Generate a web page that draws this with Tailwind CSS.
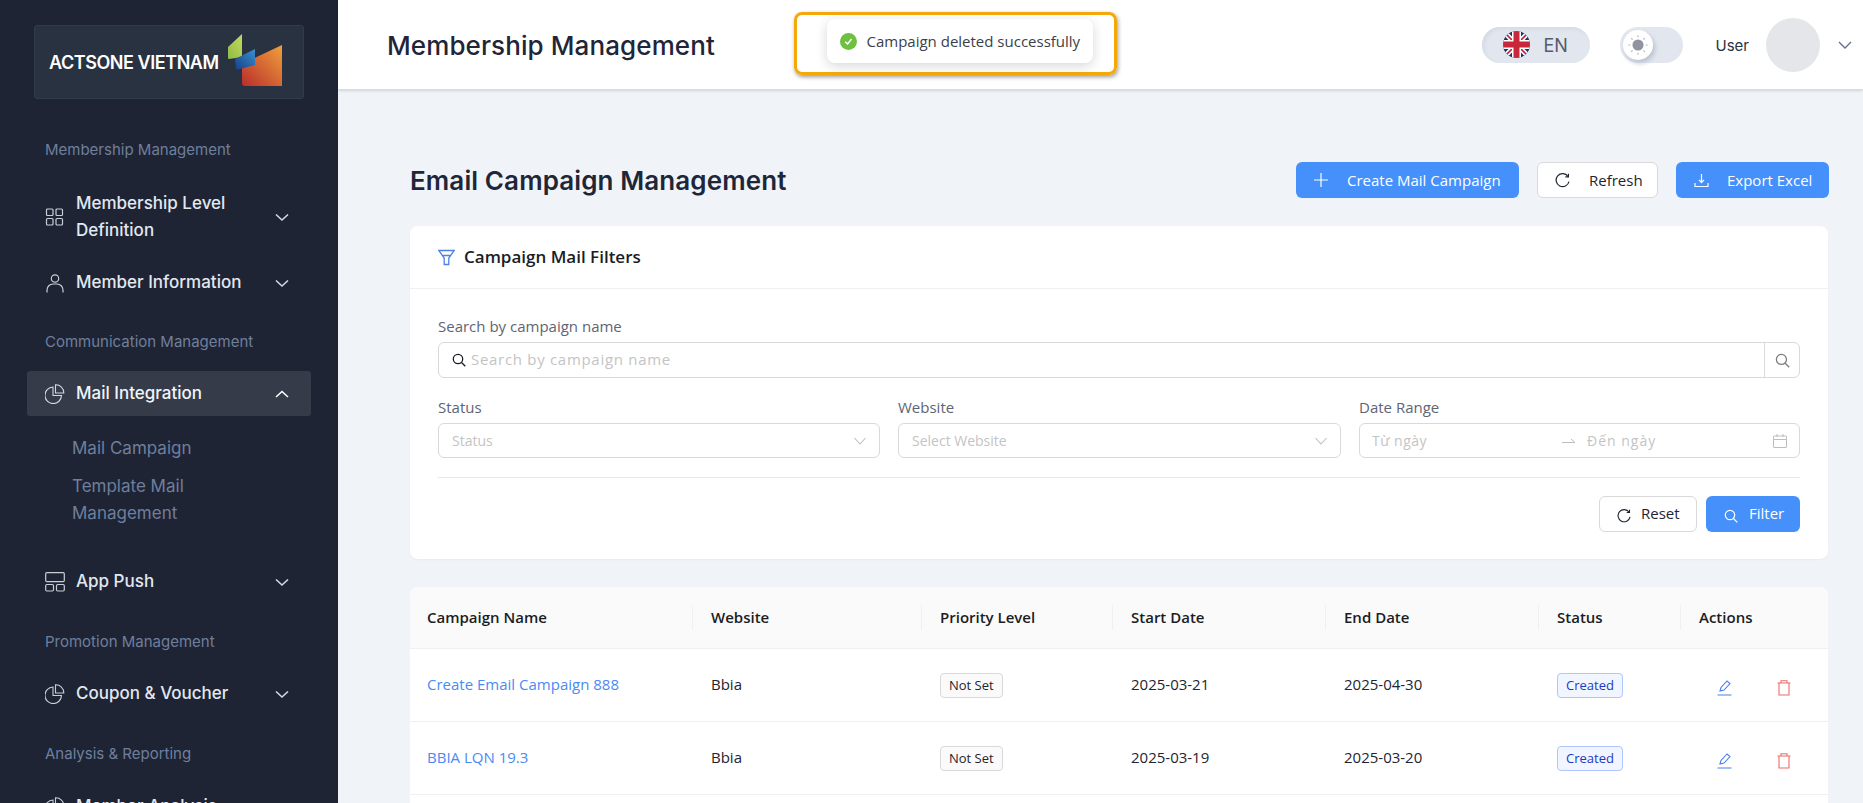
<!DOCTYPE html>
<html lang="en">
<head>
    <meta charset="UTF-8">
    <title>Email Campaign Management</title>
    <script src="https://cdn.jsdelivr.net/npm/@tailwindcss/browser@4"></script>
</head>
<body class="h-screen overflow-hidden bg-[#f0f4f8] font-['Open_Sans',sans-serif] text-[#1f2430]">
<div class="flex h-[803px] overflow-hidden">
    <!-- Sidebar -->
    <aside class="w-[338px] shrink-0 h-full overflow-hidden bg-[#1e2434] font-['Inter',sans-serif]">
        <div class="mt-[25px] ml-[34px] w-[270px] h-[74px] flex items-center justify-between pl-[14px] pr-[21px] rounded-[3px] bg-[#293241] border border-[#323b4a]">
            <span class="text-white font-semibold text-[18px] tracking-[-0.45px]">ACTSONE VIETNAM</span>
            <svg class="-mt-[4px]" width="54" height="52" viewBox="0 0 54 52">
                <defs>
                    <linearGradient id="logo-o" x1="0" y1="1" x2="1" y2="0"><stop offset="0" stop-color="#b92d2d"/><stop offset="1" stop-color="#f0a03a"/></linearGradient>
                    <linearGradient id="logo-g" x1="0" y1="1" x2="1" y2="0"><stop offset="0" stop-color="#8fbb48"/><stop offset="1" stop-color="#c5d95c"/></linearGradient>
                    <linearGradient id="logo-b" x1="0" y1="1" x2="1" y2="0"><stop offset="0" stop-color="#173f85"/><stop offset="1" stop-color="#3a8fd0"/></linearGradient>
                </defs>
                <path d="M14 30 L 54 11 V 52 H 17 Q 14 52 14 49 Z" fill="url(#logo-o)"/>
                <path d="M0 13 L 14 0 V 23 L 1 25 Q 0 25 0 24 Z" fill="url(#logo-g)"/>
                <path d="M7 25 L 27 15 V 31 L 8 36 Z" fill="url(#logo-b)"/>
            </svg>
        </div>
        <nav class="mt-[41px]">
            <p class="pl-[45px] h-[20px] leading-[20px] text-[15px] text-[#6f7f9c]">Membership Management</p>
            <div class="mt-[30px] mx-[27px] pl-[18px] pr-[21px] flex items-center text-[#e2e8f0]">
                <svg class="w-[20px] h-[20px] shrink-0 text-[#c9ced6]" viewBox="0 0 20 20" fill="none" stroke="currentColor" stroke-width="1.2"><rect x="1.5" y="2" width="6.5" height="6.5" rx="1"/><rect x="11" y="2" width="6.5" height="6.5" rx="1"/><rect x="1.5" y="11.5" width="6.5" height="6.5" rx="1"/><rect x="11" y="11.5" width="6.5" height="6.5" rx="1"/></svg>
                <span class="ml-[11px] flex-1 text-[17px] font-medium leading-[27px]">Membership Level<br>Definition</span>
                <svg class="w-[16px] h-[16px] text-[#d5dae2]" viewBox="0 0 16 16" fill="none" stroke="currentColor" stroke-width="1.6"><path d="M2 5.5 L8 11 L14 5.5"/></svg>
            </div>
            <div class="mt-[25px] h-[27px] mx-[27px] pl-[18px] pr-[21px] flex items-center text-[#e2e8f0]">
                <svg class="w-[20px] h-[20px] shrink-0 text-[#c9ced6]" viewBox="0 0 20 20" fill="none" stroke="currentColor" stroke-width="1.2"><circle cx="10" cy="5.5" r="3.7"/><path d="M2 19.5 V 17 A 6 6 0 0 1 8 11 H 12 A 6 6 0 0 1 18 17 V 19.5"/></svg>
                <span class="ml-[11px] flex-1 text-[17px] font-medium">Member Information</span>
                <svg class="w-[16px] h-[16px] text-[#d5dae2]" viewBox="0 0 16 16" fill="none" stroke="currentColor" stroke-width="1.6"><path d="M2 5.5 L8 11 L14 5.5"/></svg>
            </div>
            <p class="mt-[36px] pl-[45px] h-[20px] leading-[20px] text-[15px] text-[#6f7f9c]">Communication Management</p>
            <div class="mt-[19px] h-[45px] mx-[27px] pl-[18px] pr-[21px] flex items-center rounded-[3px] bg-[#353b49] text-[#f1f5f9]">
                <svg class="w-[20px] h-[20px] shrink-0 text-[#d5d8de]" viewBox="0 0 20 20" fill="none" stroke="currentColor" stroke-width="1.1"><path d="M8 3 A 8.3 8.3 0 1 0 16.5 11.5 H 8 Z"/><path d="M10.5 0.8 A 8 8 0 0 1 18.8 9 H 10.5 Z"/></svg>
                <span class="ml-[11px] flex-1 text-[17px] font-medium">Mail Integration</span>
                <svg class="w-[16px] h-[16px] text-white" viewBox="0 0 16 16" fill="none" stroke="currentColor" stroke-width="1.6"><path d="M2 11 L8 5.5 L14 11"/></svg>
            </div>
            <p class="mt-[19px] pl-[72px] h-[27px] leading-[27px] text-[17px] text-[#6f7f9c]">Mail Campaign</p>
            <p class="mt-[11px] pl-[72px] leading-[27px] text-[17px] text-[#6f7f9c]">Template Mail<br>Management</p>
            <div class="mt-[41px] h-[27px] mx-[27px] pl-[18px] pr-[21px] flex items-center text-[#e2e8f0]">
                <svg class="w-[20px] h-[20px] shrink-0 text-[#c9ced6]" viewBox="0 0 20 20" fill="none" stroke="currentColor" stroke-width="1.2"><rect x="0.7" y="0.7" width="18.6" height="9" rx="1.2"/><rect x="0.7" y="12.5" width="7.8" height="6.5" rx="1.2"/><rect x="11.5" y="12.5" width="7.8" height="6.5" rx="1.2"/></svg>
                <span class="ml-[11px] flex-1 text-[17px] font-medium">App Push</span>
                <svg class="w-[16px] h-[16px] text-[#d5dae2]" viewBox="0 0 16 16" fill="none" stroke="currentColor" stroke-width="1.6"><path d="M2 5.5 L8 11 L14 5.5"/></svg>
            </div>
            <p class="mt-[37px] pl-[45px] h-[20px] leading-[20px] text-[15px] text-[#6f7f9c]">Promotion Management</p>
            <div class="mt-[28px] h-[27px] mx-[27px] pl-[18px] pr-[21px] flex items-center text-[#e2e8f0]">
                <svg class="w-[20px] h-[20px] shrink-0 text-[#c9ced6]" viewBox="0 0 20 20" fill="none" stroke="currentColor" stroke-width="1.1"><path d="M8 3 A 8.3 8.3 0 1 0 16.5 11.5 H 8 Z"/><path d="M10.5 0.8 A 8 8 0 0 1 18.8 9 H 10.5 Z"/></svg>
                <span class="ml-[11px] flex-1 text-[17px] font-medium">Coupon &amp; Voucher</span>
                <svg class="w-[16px] h-[16px] text-[#d5dae2]" viewBox="0 0 16 16" fill="none" stroke="currentColor" stroke-width="1.6"><path d="M2 5.5 L8 11 L14 5.5"/></svg>
            </div>
            <p class="mt-[37px] pl-[45px] h-[20px] leading-[20px] text-[15px] text-[#6f7f9c]">Analysis &amp; Reporting</p>
            <div class="mt-[29px] h-[27px] mx-[27px] pl-[18px] pr-[21px] flex items-center text-[#e2e8f0]">
                <svg class="w-[20px] h-[20px] shrink-0 text-[#c9ced6]" viewBox="0 0 20 20" fill="none" stroke="currentColor" stroke-width="1.1"><path d="M8 3 A 8.3 8.3 0 1 0 16.5 11.5 H 8 Z"/><path d="M10.5 0.8 A 8 8 0 0 1 18.8 9 H 10.5 Z"/></svg>
                <span class="ml-[11px] flex-1 text-[17px] font-medium">Member Analysis</span>
                <svg class="w-[16px] h-[16px] text-[#d5dae2]" viewBox="0 0 16 16" fill="none" stroke="currentColor" stroke-width="1.6"><path d="M2 5.5 L8 11 L14 5.5"/></svg>
            </div>
        </nav>
    </aside>

    <div class="relative flex-1 min-w-0">
        <!-- Header -->
        <header class="h-[90px] bg-white border-b border-[#d9dde3] shadow-sm flex items-center justify-between pl-[49px] pr-[11px] font-['Inter',sans-serif]">
            <h1 class="mt-[2px] text-[26px] font-medium text-[#1f2638] tracking-[0.1px]">Membership Management</h1>
            <div class="flex items-center">
                <div class="w-[108px] h-[36px] rounded-full bg-[#e2e7ef] shadow-[inset_2px_2px_4px_#d3d9e3] flex items-center pl-[21px]">
                    <svg class="w-[27px] h-[27px]" viewBox="0 0 27 27">
                        <defs><clipPath id="flag"><circle cx="13.5" cy="13.5" r="13.5"/></clipPath></defs>
                        <g clip-path="url(#flag)">
                            <rect width="27" height="27" fill="#1d2f6f"/>
                            <path d="M0 0 L27 27 M27 0 L0 27" stroke="#fff" stroke-width="5"/>
                            <path d="M0 0 L27 27 M27 0 L0 27" stroke="#c8283a" stroke-width="1.6"/>
                            <path d="M13.5 0 V27 M0 13.5 H27" stroke="#fff" stroke-width="9"/>
                            <path d="M13.5 0 V27 M0 13.5 H27" stroke="#c8283a" stroke-width="6"/>
                        </g>
                    </svg>
                    <span class="ml-[14px] mt-[2px] text-[18px] text-[#555c6b]">EN</span>
                </div>
                <div class="ml-[30px] w-[63px] h-[36px] rounded-full bg-[#e2e7ef] flex items-center pl-[3px]">
                    <div class="w-[30px] h-[30px] rounded-full bg-white shadow-[2px_3px_5px_#b9c0cc] flex items-center justify-center">
                        <svg class="w-[20px] h-[20px]" viewBox="0 0 18 18">
                            <circle cx="9" cy="9" r="5" fill="#8f949e"/>
                            <g stroke="#a5a9b2" stroke-width="1" stroke-linecap="round"><path d="M9 0.8 V1.6 M9 16.4 V17.2 M0.8 9 H1.6 M16.4 9 H17.2 M3.2 3.2 L3.8 3.8 M14.2 14.2 L14.8 14.8 M3.2 14.8 L3.8 14.2 M14.2 3.8 L14.8 3.2"/></g>
                        </svg>
                    </div>
                </div>
                <span class="ml-[33px] mt-[3px] text-[15px] text-[#2b3240]">User</span>
                <div class="ml-[17px] w-[54px] h-[54px] rounded-full bg-[#e4e6ea]"></div>
                <svg class="ml-[18px] w-[14px] h-[14px] text-[#64708a]" viewBox="0 0 14 14" fill="none" stroke="currentColor" stroke-width="1.4"><path d="M1 4 L7 10 L13 4"/></svg>
            </div>
        </header>

        <!-- Toast, with its highlight frame -->
        <div class="absolute left-[456px] top-[12px] w-[323px] h-[63px] rounded-[8px] border-[3px] border-[#f5a80a] shadow-[1px_2px_4px_rgba(0,0,0,0.4)] flex items-center justify-center">
            <div class="w-[266px] h-[44px] -mt-[5px] ml-[8px] rounded-[8px] bg-white shadow-[0_3px_12px_rgba(0,0,0,0.16)] flex items-center pl-[13px]">
                <svg class="w-[17px] h-[17px]" viewBox="0 0 17 17"><circle cx="8.5" cy="8.5" r="8.5" fill="#6fbf40"/><path d="M5.2 8.7 L7.6 11 L11.6 6" stroke="#fff" stroke-width="1.5" fill="none"/></svg>
                <span class="ml-[10px] text-[15px] text-[#3a3f4a]">Campaign deleted successfully</span>
            </div>
        </div>

        <main class="pl-[72px] pr-[35px]">
            <div class="mt-[72px] h-[36px] flex items-center justify-between">
                <h2 class="font-['Inter',sans-serif] text-[26px] font-semibold text-[#1f2638] tracking-[0.1px]">Email Campaign Management</h2>
                <div class="flex items-center -mr-px">
                    <button class="w-[223px] h-[36px] rounded-[6px] bg-[#4690fb] text-white text-[15px] flex items-center pl-[18px]">
                        <svg class="w-[14px] h-[14px]" viewBox="0 0 14 14" stroke="currentColor" stroke-width="1.2"><path d="M7 0 V14 M0 7 H14"/></svg>
                        <span class="ml-[19px]">Create Mail Campaign</span>
                    </button>
                    <button class="ml-[18px] w-[121px] h-[36px] rounded-[6px] bg-white border border-[#d9d9d9] text-[#1f2430] text-[15px] flex items-center pl-[17px]">
                        <svg class="w-[15px] h-[15px]" viewBox="0 0 15 15" fill="none" stroke="currentColor" stroke-width="1.2"><path d="M13 3.5 A 6.5 6.5 0 1 0 14 8.5"/><path d="M13.4 0.8 V 3.8 H 10.4"/></svg>
                        <span class="ml-[19px]">Refresh</span>
                    </button>
                    <button class="ml-[18px] w-[153px] h-[36px] rounded-[6px] bg-[#4690fb] text-white text-[15px] flex items-center pl-[18px]">
                        <svg class="w-[15px] h-[15px]" viewBox="0 0 15 15" fill="none" stroke="currentColor" stroke-width="1.2"><path d="M7.5 1 V9 M5 6.8 L7.5 9.6 L10 6.8 M1 10 V13.5 H14 V10"/></svg>
                        <span class="ml-[18px]">Export Excel</span>
                    </button>
                </div>
            </div>

            <!-- Filters card -->
            <section class="mt-[28px] h-[333px] bg-white rounded-[8px] shadow-[0_1px_2px_rgba(0,0,0,0.04)]">
                <div class="h-[63px] border-b border-[#f0f0f0] flex items-center pl-[28px]">
                    <svg class="w-[17px] h-[17px] text-[#4f7fe8]" viewBox="0 0 17 17" fill="none" stroke="currentColor" stroke-width="1.3"><path d="M0.8 1.5 H16.2 L10.8 9 V15.5 H6.2 V9 Z M4 6.5 H13"/></svg>
                    <h3 class="ml-[9px] text-[17px] font-semibold text-[#1a1d24]">Campaign Mail Filters</h3>
                </div>
                <div class="px-[28px] pt-[27px]">
                    <label class="block h-[20px] leading-[20px] text-[15px] text-[#5e6573]">Search by campaign name</label>
                    <div class="mt-[6px] h-[36px] flex rounded-[6px] border border-[#d9d9d9]">
                        <div class="flex-1 flex items-center pl-[13px]">
                            <svg class="w-[14px] h-[14px] text-[#1a1d24]" viewBox="0 0 14 14" fill="none" stroke="currentColor" stroke-width="1.3"><circle cx="6" cy="6" r="4.7"/><path d="M9.5 9.5 L13.3 13.3"/></svg>
                            <span class="ml-[5px] -mt-[1px] text-[15px] tracking-[0.7px] text-[#c4c4c4]">Search by campaign name</span>
                        </div>
                        <div class="w-[35px] border-l border-[#d9d9d9] flex items-center justify-center">
                            <svg class="w-[15px] h-[15px] text-[#7d7d7d]" viewBox="0 0 14 14" fill="none" stroke="currentColor" stroke-width="1.2"><circle cx="6" cy="6" r="4.7"/><path d="M9.5 9.5 L13.3 13.3"/></svg>
                        </div>
                    </div>
                    <div class="mt-[19px] grid grid-cols-[442px_443px_1fr] gap-x-[18px]">
                        <div>
                            <label class="block h-[20px] leading-[20px] text-[15px] text-[#5e6573]">Status</label>
                            <div class="mt-[6px] h-[35px] rounded-[6px] border border-[#d9d9d9] flex items-center justify-between pl-[13px] pr-[13px]">
                                <span class="text-[14px] text-[#c4c4c4]">Status</span>
                                <svg class="w-[12px] h-[12px] text-[#bdbdbd]" viewBox="0 0 12 12" fill="none" stroke="currentColor" stroke-width="1.1"><path d="M0.5 3 L6 9 L11.5 3"/></svg>
                            </div>
                        </div>
                        <div>
                            <label class="block h-[20px] leading-[20px] text-[15px] text-[#5e6573]">Website</label>
                            <div class="mt-[6px] h-[35px] rounded-[6px] border border-[#d9d9d9] flex items-center justify-between pl-[13px] pr-[13px]">
                                <span class="text-[14px] text-[#c4c4c4]">Select Website</span>
                                <svg class="w-[12px] h-[12px] text-[#bdbdbd]" viewBox="0 0 12 12" fill="none" stroke="currentColor" stroke-width="1.1"><path d="M0.5 3 L6 9 L11.5 3"/></svg>
                            </div>
                        </div>
                        <div>
                            <label class="block h-[20px] leading-[20px] text-[15px] text-[#5e6573]">Date Range</label>
                            <div class="mt-[6px] h-[35px] rounded-[6px] border border-[#d9d9d9] flex items-center pl-[12px] pr-[12px]">
                                <span class="w-[190px] text-[14px] tracking-[0.5px] text-[#c4c4c4]">Từ ngày</span>
                                <svg class="w-[14px] h-[6px] text-[#bdbdbd]" viewBox="0 0 14 6" fill="none" stroke="currentColor" stroke-width="1"><path d="M0 4.5 H13 L9 1"/></svg>
                                <span class="ml-[11px] flex-1 text-[14px] tracking-[1px] text-[#c4c4c4]">Đến ngày</span>
                                <svg class="w-[14px] h-[14px] text-[#bdbdbd]" viewBox="0 0 14 14" fill="none" stroke="currentColor" stroke-width="1"><rect x="0.5" y="2" width="13" height="11.5" rx="0.5"/><path d="M0.5 5.5 H13.5 M4 0 V3 M10 0 V3"/></svg>
                            </div>
                        </div>
                    </div>
                    <div class="mt-[19px] border-t border-[#e8e8e8] pt-[18px] flex justify-end">
                        <button class="w-[98px] h-[36px] rounded-[6px] bg-white border border-[#d9d9d9] text-[15px] text-[#1f2430] flex items-center pl-[17px]">
                            <svg class="w-[14px] h-[14px] mt-[3px]" viewBox="0 0 15 15" fill="none" stroke="currentColor" stroke-width="1.2"><path d="M13 3.5 A 6.5 6.5 0 1 0 14 8.5"/><path d="M13.4 0.8 V 3.8 H 10.4"/></svg>
                            <span class="ml-[10px] -mt-[1px]">Reset</span>
                        </button>
                        <button class="ml-[9px] w-[94px] h-[36px] rounded-[6px] bg-[#4690fb] text-white text-[15px] flex items-center pl-[18px]">
                            <svg class="w-[14px] h-[14px] mt-[3px]" viewBox="0 0 14 14" fill="none" stroke="currentColor" stroke-width="1.2"><circle cx="6" cy="6" r="4.7"/><path d="M9.5 9.5 L13.3 13.3"/></svg>
                            <span class="ml-[11px] -mt-[1px]">Filter</span>
                        </button>
                    </div>
                </div>
            </section>

            <!-- Table -->
            <section class="mt-[28px] h-[300px] bg-white rounded-t-[8px] overflow-hidden">
                <table class="w-full table-fixed text-[15px] text-left">
                    <colgroup>
                        <col class="w-[283px]"><col class="w-[229px]"><col class="w-[191px]"><col class="w-[213px]"><col class="w-[213px]"><col class="w-[142px]"><col>
                    </colgroup>
                    <thead class="bg-[#fafafa] text-[#1a1d24]">
                        <tr class="h-[61px] border-b border-[#f0f0f0]">
                            <th class="px-[17px] font-semibold relative">Campaign Name<span class="absolute right-0 top-[18px] h-[25px] w-px bg-[#f0f0f0]"></span></th>
                            <th class="px-[18px] font-semibold relative">Website<span class="absolute right-0 top-[18px] h-[25px] w-px bg-[#f0f0f0]"></span></th>
                            <th class="px-[18px] font-semibold relative">Priority Level<span class="absolute right-0 top-[18px] h-[25px] w-px bg-[#f0f0f0]"></span></th>
                            <th class="px-[18px] font-semibold relative">Start Date<span class="absolute right-0 top-[18px] h-[25px] w-px bg-[#f0f0f0]"></span></th>
                            <th class="px-[18px] font-semibold relative">End Date<span class="absolute right-0 top-[18px] h-[25px] w-px bg-[#f0f0f0]"></span></th>
                            <th class="px-[18px] font-semibold relative">Status<span class="absolute right-0 top-[18px] h-[25px] w-px bg-[#f0f0f0]"></span></th>
                            <th class="px-[18px] font-semibold">Actions</th>
                        </tr>
                    </thead>
                    <tbody class="text-[#1f2430]">
                        <tr class="h-[73px] border-b border-[#f0f0f0]">
                            <td class="px-[17px] text-[#4a8af4]">Create Email Campaign 888</td>
                            <td class="px-[18px]">Bbia</td>
                            <td class="px-[18px]"><span class="inline-block translate-y-px h-[25px] leading-[23px] px-[8px] text-[13px] rounded-[4px] border border-[#d9d9d9] bg-[#fafafa]">Not Set</span></td>
                            <td class="px-[18px]">2025-03-21</td>
                            <td class="px-[18px]">2025-04-30</td>
                            <td class="px-[18px]"><span class="inline-block translate-y-px h-[25px] leading-[23px] px-[8px] text-[13px] rounded-[4px] border border-[#adc6ff] bg-[#f0f5ff] text-[#1d39c4]">Created</span></td>
                            <td class="px-[18px]">
                                <div class="flex items-center pl-[18px] pt-[7px]">
                                    <svg class="w-[15px] h-[16px] text-[#4a7fee]" viewBox="0 0 15 16" fill="none" stroke="currentColor" stroke-width="1.1"><path d="M3 11 L4 7.5 L10 1 L13 3.5 L7 10 Z M0.5 15 H14.5"/></svg>
                                    <svg class="ml-[45px] w-[14px] h-[16px] text-[#ef6a6a]" viewBox="0 0 14 16" fill="none" stroke="currentColor" stroke-width="1.1"><path d="M0.5 3 H13.5 M4 3 V0.8 H10 V3 M2 3 V15 H12 V3"/></svg>
                                </div>
                            </td>
                        </tr>
                        <tr class="h-[73px] border-b border-[#f0f0f0]">
                            <td class="px-[17px] text-[#4a8af4]">BBIA LQN 19.3</td>
                            <td class="px-[18px]">Bbia</td>
                            <td class="px-[18px]"><span class="inline-block translate-y-px h-[25px] leading-[23px] px-[8px] text-[13px] rounded-[4px] border border-[#d9d9d9] bg-[#fafafa]">Not Set</span></td>
                            <td class="px-[18px]">2025-03-19</td>
                            <td class="px-[18px]">2025-03-20</td>
                            <td class="px-[18px]"><span class="inline-block translate-y-px h-[25px] leading-[23px] px-[8px] text-[13px] rounded-[4px] border border-[#adc6ff] bg-[#f0f5ff] text-[#1d39c4]">Created</span></td>
                            <td class="px-[18px]">
                                <div class="flex items-center pl-[18px] pt-[7px]">
                                    <svg class="w-[15px] h-[16px] text-[#4a7fee]" viewBox="0 0 15 16" fill="none" stroke="currentColor" stroke-width="1.1"><path d="M3 11 L4 7.5 L10 1 L13 3.5 L7 10 Z M0.5 15 H14.5"/></svg>
                                    <svg class="ml-[45px] w-[14px] h-[16px] text-[#ef6a6a]" viewBox="0 0 14 16" fill="none" stroke="currentColor" stroke-width="1.1"><path d="M0.5 3 H13.5 M4 3 V0.8 H10 V3 M2 3 V15 H12 V3"/></svg>
                                </div>
                            </td>
                        </tr>
                    </tbody>
                </table>
            </section>
        </main>
    </div>
</div>
</body>
</html>
